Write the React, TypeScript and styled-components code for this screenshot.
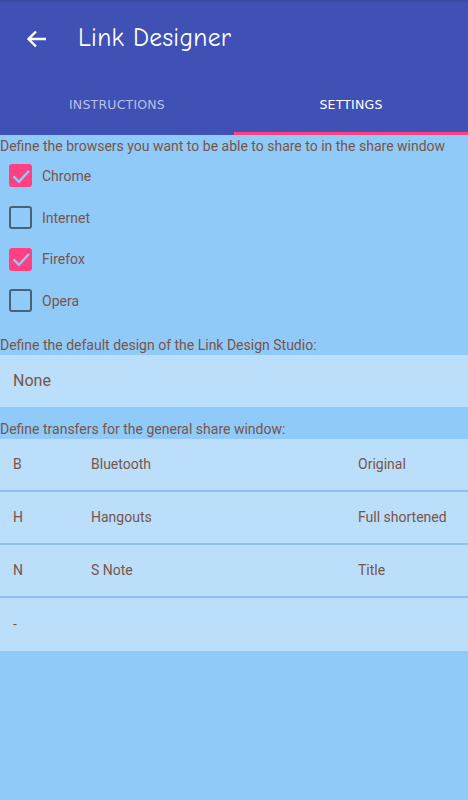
import React from "react";
import styled, { createGlobalStyle } from "styled-components";

const Global = createGlobalStyle`
  html, body { margin: 0; padding: 0; background: #90CAF9; }
  body { font-family: Roboto, "Noto Sans", sans-serif; }
  * { box-sizing: border-box; }
`;

const Page = styled.div`
  width: 468px;
  min-height: 800px;
  background: #90CAF9;
  display: flex;
  flex-direction: column;
`;

const AppBar = styled.header`
  background: #3F51B5;
  border-top: 2px solid #3949A3;
  display: flex;
  flex-direction: column;
`;

const Toolbar = styled.div`
  height: 83px;
  display: flex;
  align-items: center;
  padding-left: 24px;
`;

const BackButton = styled.div`
  width: 26px;
  height: 26px;
  display: flex;
  align-items: center;
  justify-content: center;
  margin-right: 28px;
  margin-top: -9px;
`;

const Title = styled.h1`
  margin: 0;
  margin-top: -12px;
  color: #ffffff;
  font-family: "Comic Sans MS", "Comic Neue", "DejaVu Sans", sans-serif;
  font-weight: 400;
  font-size: 25.5px;
  letter-spacing: 0.3px;
`;

const Tabs = styled.div`
  display: flex;
  height: 50px;
`;

const Tab = styled.div<{ $active?: boolean }>`
  flex: 1;
  display: flex;
  align-items: center;
  justify-content: center;
  color: ${(p) => (p.$active ? "#ffffff" : "rgba(255,255,255,0.65)")};
  font-family: "DejaVu Sans", sans-serif;
  font-size: 12.5px;
  letter-spacing: 0.2px;
  padding-bottom: 8px;
  border-bottom: 3px solid ${(p) => (p.$active ? "#FF4081" : "transparent")};
`;

const Content = styled.main`
  display: flex;
  flex-direction: column;
  color: #795548;
`;

const SectionLabel = styled.div`
  font-size: 14px;
  line-height: 19px;
  padding-top: 2px;
  color: #795548;
`;

const CheckList = styled.div`
  display: flex;
  flex-direction: column;
  margin-top: -1px;
  padding: 0 0 12px 9px;
`;

const CheckRow = styled.label`
  height: 41.7px;
  display: flex;
  align-items: center;
  gap: 10px;
  font-size: 14px;
`;

const Box = styled.span<{ $checked?: boolean }>`
  width: 23px;
  height: 23px;
  border-radius: 3px;
  display: flex;
  align-items: center;
  justify-content: center;
  background: ${(p) => (p.$checked ? "#FF4081" : "transparent")};
  border: ${(p) => (p.$checked ? "none" : "2.5px solid #4A6278")};
`;

const Panel = styled.div`
  background: #BBDEFB;
  height: 52px;
  display: flex;
  align-items: center;
  padding-left: 13px;
  font-size: 16px;
  margin: 0 0 11px;
`;

const Table = styled.div`
  display: flex;
  flex-direction: column;
  background: #BBDEFB;
`;

const TRow = styled.div`
  height: 53px;
  display: grid;
  grid-template-columns: 78px 267px 1fr;
  align-items: center;
  padding-left: 13px;
  font-size: 14px;
  border-bottom: 2px solid #90C1EE;
  &:last-child { border-bottom: none; }
`;

const Check = () => (
  <svg width="20" height="20" viewBox="0 0 24 24">
    <path d="M3 12.5 L9.5 19 L21.5 6" fill="none" stroke="#90CAF9" strokeWidth="2.8" />
  </svg>
);

const browsers = [
  { name: "Chrome", checked: true },
  { name: "Internet", checked: false },
  { name: "Firefox", checked: true },
  { name: "Opera", checked: false },
];

const transfers = [
  ["B", "Bluetooth", "Original"],
  ["H", "Hangouts", "Full shortened"],
  ["N", "S Note", "Title"],
  ["-", "", ""],
];

export default function App() {
  return (
    <Page>
      <Global />
      <AppBar>
        <Toolbar>
          <BackButton>
            <svg width="24" height="24" viewBox="0 0 24 24">
              <path d="M21 12H4M11 4.5L3.5 12L11 19.5" fill="none" stroke="#fff" strokeWidth="2.4" />
            </svg>
          </BackButton>
          <Title>Link Designer</Title>
        </Toolbar>
        <Tabs>
          <Tab>INSTRUCTIONS</Tab>
          <Tab $active>SETTINGS</Tab>
        </Tabs>
      </AppBar>
      <Content>
        <SectionLabel>Define the browsers you want to be able to share to in the share window</SectionLabel>
        <CheckList>
          {browsers.map((b) => (
            <CheckRow key={b.name}>
              <Box $checked={b.checked}>{b.checked && <Check />}</Box>
              {b.name}
            </CheckRow>
          ))}
        </CheckList>
        <SectionLabel>Define the default design of the Link Design Studio:</SectionLabel>
        <Panel>None</Panel>
        <SectionLabel>Define transfers for the general share window:</SectionLabel>
        <Table>
          {transfers.map((t, i) => (
            <TRow key={i}>
              <span>{t[0]}</span>
              <span>{t[1]}</span>
              <span>{t[2]}</span>
            </TRow>
          ))}
        </Table>
      </Content>
    </Page>
  );
}
